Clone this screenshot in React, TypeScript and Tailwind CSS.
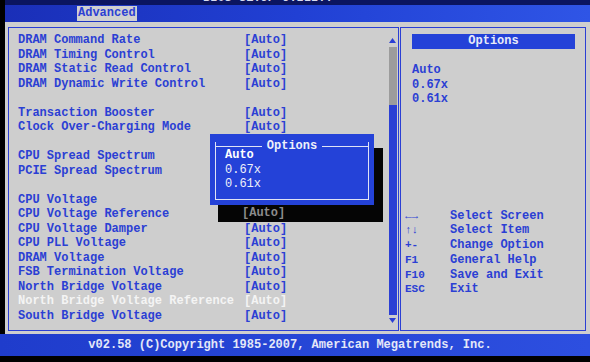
const blue = "text-[#2b3fd4]";

const rows: (null | { label: string; value: string; hi?: boolean })[] = [
  { label: "DRAM Command Rate", value: "[Auto]" },
  { label: "DRAM Timing Control", value: "[Auto]" },
  { label: "DRAM Static Read Control", value: "[Auto]" },
  { label: "DRAM Dynamic Write Control", value: "[Auto]" },
  null,
  { label: "Transaction Booster", value: "[Auto]" },
  { label: "Clock Over-Charging Mode", value: "[Auto]" },
  null,
  { label: "CPU Spread Spectrum", value: "" },
  { label: "PCIE Spread Spectrum", value: "" },
  null,
  { label: "CPU Voltage", value: "" },
  { label: "CPU Voltage Reference", value: "" },
  { label: "CPU Voltage Damper", value: "[Auto]" },
  { label: "CPU PLL Voltage", value: "[Auto]" },
  { label: "DRAM Voltage", value: "[Auto]" },
  { label: "FSB Termination Voltage", value: "[Auto]" },
  { label: "North Bridge Voltage", value: "[Auto]" },
  { label: "North Bridge Voltage Reference", value: "[Auto]", hi: true },
  { label: "South Bridge Voltage", value: "[Auto]" },
];

const help = [
  ["←→", "Select Screen"],
  ["↑↓", "Select Item"],
  ["+-", "Change Option"],
  ["F1", "General Help"],
  ["F10", "Save and Exit"],
  ["ESC", "Exit"],
];

export default function App() {
  return (
    <div
      className="flex h-[362px] w-[590px] flex-col overflow-hidden bg-black text-[12px] font-bold"
      style={{ fontFamily: '"Liberation Mono", "DejaVu Sans Mono", monospace' }}
    >
      {/* title bar */}
      <div className="ml-[5px] flex h-[22px] flex-col bg-gradient-to-r from-[#1a2fb8] via-[#2140d4] to-[#2f55e6]">
        <div className="flex h-[5px] justify-start overflow-hidden bg-[#0b1560] pl-[198px]">
          <span className="-mt-[9px] leading-[14px] text-[#d8dcf0]">BIOS SETUP UTILITY</span>
        </div>
        <div className="flex pl-[72px] pt-[1px]">
          <span className="h-[15px] bg-[#d0d0d0] px-[1px] leading-[15px] text-[#2b3fd4]">Advanced</span>
        </div>
      </div>

      {/* body */}
      <div className="ml-[5px] flex h-[312px] bg-[#cecece] pl-[3px] pr-[4px] pt-[5px] pb-[3px]">
        {/* left panel */}
        <div className="relative flex w-[391px] border border-[#2b3fd4]">
          <div className="flex-1 pl-[9px] pt-[5px]">
            {rows.map((r, i) =>
              r ? (
                <div
                  key={i}
                  className={`grid h-[14.5px] grid-cols-[226px_auto] leading-[14.5px] ${r.hi ? "text-[#f4f4f4]" : blue}`}
                >
                  <span className="whitespace-pre">{r.label}</span>
                  <span>{r.value}</span>
                </div>
              ) : (
                <div key={i} className="h-[14.5px]" />
              )
            )}
          </div>

          {/* scroll bar */}
          <div className="mr-[1px] flex w-[9px] flex-col items-center pt-[9px] pb-[6px]">
            <svg width="9" height="7" viewBox="0 0 9 7">
              <path d="M4.5 1 L8 6 L1 6 Z" fill="#2b3fd4" />
            </svg>
            <div className="mt-[3px] h-[58px] w-[8px] bg-[#9c9c9c]" />
            <div className="w-[8px] flex-1 bg-[#2b3fd4]" />
            <svg className="mt-[2px]" width="9" height="7" viewBox="0 0 9 7">
              <path d="M1 1 L8 1 L4.5 6 Z" fill="#2b3fd4" />
            </svg>
          </div>

          {/* popup shadow */}
          <div className="absolute left-[209px] top-[120px] flex h-[74px] w-[165px] items-end bg-[#050505] pb-[2px] pl-[24px]">
            <span className="leading-[14px] text-[#8c8c8c]">[Auto]</span>
          </div>

          {/* popup */}
          <div className="absolute left-[201px] top-[106px] h-[71px] w-[164px] bg-[#2442d8] p-[5px] pt-[8px]">
            <div className="relative h-full border border-t-0 border-[#dfe3f5] px-[9px] pt-[6px] text-[#eef0fa]">
              <div className="absolute -top-[1px] left-0 right-0 flex items-center">
                <div className="h-[1px] flex-1 bg-[#dfe3f5]" />
                <span className="-mt-[1px] px-[5px] leading-[12px]">Options</span>
                <div className="h-[1px] flex-1 bg-[#dfe3f5]" />
              </div>
              <div className="h-[14.5px] leading-[14.5px] text-white">Auto</div>
              <div className="h-[14.5px] font-normal leading-[14.5px]">0.67x</div>
              <div className="h-[14.5px] font-normal leading-[14.5px]">0.61x</div>
            </div>
          </div>
        </div>

        {/* right panel */}
        <div className="ml-[1px] flex flex-1 flex-col border border-[#2b3fd4] pr-[10px]">
          <div className="ml-[11px] mt-[6px] h-[15px] bg-[#2442d8] text-center leading-[15px] text-[#e8ebf8]">
            Options
          </div>
          <div className={`ml-[11px] mt-[14px] ${blue}`}>
            <div className="h-[14.5px] leading-[14.5px]">Auto</div>
            <div className="h-[14.5px] leading-[14.5px]">0.67x</div>
            <div className="h-[14.5px] leading-[14.5px]">0.61x</div>
          </div>
          <div className={`ml-[4px] mt-[102px] ${blue}`}>
            {help.map(([k, t]) => (
              <div key={k} className="grid h-[14.8px] grid-cols-[45px_auto] leading-[14.8px]">
                <span className="text-[11px]">{k}</span>
                <span>{t}</span>
              </div>
            ))}
          </div>
        </div>
      </div>

      {/* footer */}
      <div className="flex h-[22px] items-center justify-center bg-gradient-to-r from-[#1f3ccc] to-[#2d4fe0] pr-[10px] text-[#e4e8f8]">
        v02.58 (C)Copyright 1985-2007, American Megatrends, Inc.
      </div>
      <div className="flex-1 bg-black" />
    </div>
  );
}
